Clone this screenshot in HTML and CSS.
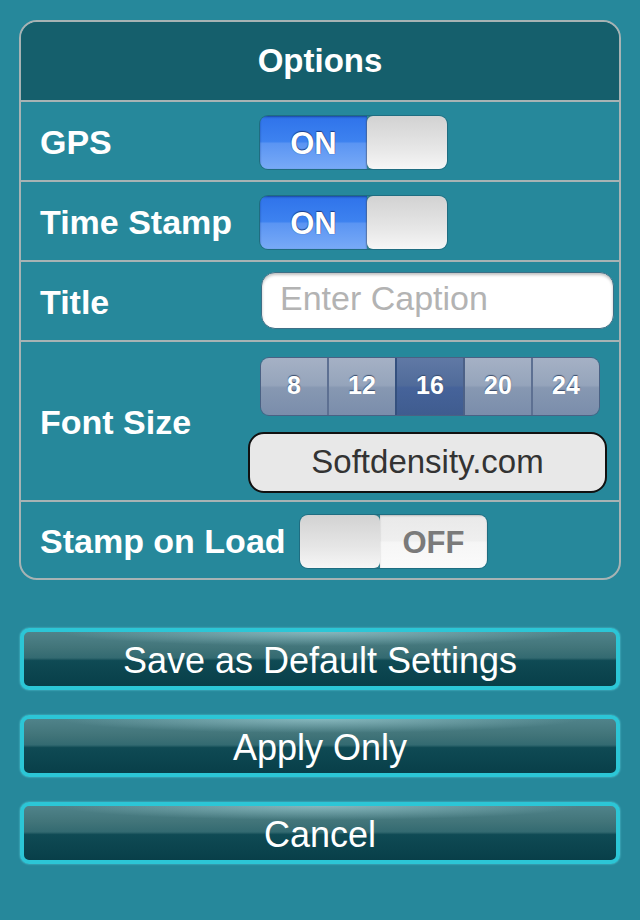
FILE: index.html
```html
<!DOCTYPE html>
<html>
<head>
<meta charset="utf-8">
<link rel="stylesheet" href="styles.css">
</head>
<body>
<div class="screen">
  <div class="panel">
    <div class="header">Options</div>
    <div class="row">
      <div class="label">GPS</div>
      <div class="switch on"><div class="track">ON</div><div class="knob"></div></div>
    </div>
    <div class="row">
      <div class="label">Time Stamp</div>
      <div class="switch on"><div class="track">ON</div><div class="knob"></div></div>
    </div>
    <div class="row">
      <div class="label">Title</div>
      <input class="caption" type="text" placeholder="Enter Caption">
    </div>
    <div class="row font-row">
      <div class="label font-label">Font Size</div>
      <div class="font-controls">
        <div class="segments">
          <div class="seg">8</div>
          <div class="seg">12</div>
          <div class="seg selected">16</div>
          <div class="seg">20</div>
          <div class="seg">24</div>
        </div>
        <div class="site-btn">Softdensity.com</div>
      </div>
    </div>
    <div class="row stamp-row">
      <div class="label stamp-label">Stamp on Load</div>
      <div class="switch off"><div class="knob"></div><div class="track">OFF</div></div>
    </div>
  </div>
  <div class="actions">
    <div class="btn">Save as Default Settings</div>
    <div class="btn">Apply Only</div>
    <div class="btn">Cancel</div>
  </div>
</div>
</body>
</html>
```
FILE: styles.css
```css
html, body {
  margin: 0;
  padding: 0;
  background: #26889b;
}
body {
  width: 640px;
  height: 920px;
  overflow: hidden;
  font-family: "Liberation Sans", Arial, sans-serif;
  color: #fff;
}
.screen {
  padding: 20px 19px 0 19px;
}
.panel {
  width: 602px;
  box-sizing: border-box;
  border: 2px solid #a7b3b4;
  border-radius: 18px;
  overflow: hidden;
}
.header {
  height: 78px;
  background: #155f6c;
  display: flex;
  align-items: center;
  justify-content: center;
  font-weight: bold;
  font-size: 33px;
}
.row {
  border-top: 2px solid #a7b3b4;
  height: 78px;
  display: flex;
  align-items: center;
  padding-left: 19px;
}
.label {
  width: 220px;
  flex: none;
  font-weight: bold;
  font-size: 34px;
  line-height: 1;
  padding-top: 1px;
}
.switch {
  width: 187px;
  height: 53px;
  display: flex;
  border-radius: 8px;
  overflow: hidden;
  box-shadow: 0 0 0 1px rgba(20, 60, 80, 0.35);
  margin-top: 3px;
}
.switch .track {
  width: 107px;
  display: flex;
  align-items: center;
  justify-content: center;
  font-weight: bold;
  font-size: 31px;
  padding-top: 2px;
}
.switch.on .track {
  background: linear-gradient(to bottom, #2f73ea 0%, #3d82f0 48%, #5b95f3 52%, #78aaf6 100%);
  color: #fff;
  text-shadow: 0 -1px 1px #1d3f86, 0 0 1px #1d3f86;
  box-shadow: inset 0 1px 2px rgba(10, 40, 110, 0.6);
}
.switch.off .track {
  background: linear-gradient(to bottom, #e9e9e9 0%, #efefef 48%, #f6f6f6 52%, #fbfbfb 100%);
  color: #7a7a7a;
  box-shadow: inset 0 1px 2px rgba(0, 0, 0, 0.2);
}
.switch .knob {
  width: 80px;
  border-radius: 6px;
  background: linear-gradient(to bottom, #d2d2d2 0%, #e6e6e6 60%, #f6f6f6 100%);
  box-shadow: 0 0 1px 1px rgba(90, 90, 90, 0.4);
}
.caption {
  width: 353px;
  height: 57px;
  margin-left: 1px;
  margin-top: -1px;
  box-sizing: border-box;
  border: 1px solid #3f6f86;
  border-radius: 14px;
  background: #fff;
  box-shadow: inset 0 2px 3px rgba(0, 0, 0, 0.25);
  padding: 0 0 4px 18px;
  font-family: "Liberation Sans", Arial, sans-serif;
  font-size: 34px;
  color: #333;
  outline: none;
}
.caption::placeholder {
  color: #b3b3b3;
}
.font-row {
  height: 158px;
  align-items: center;
}
.font-label {
  width: 208px;
}
.font-controls {
  display: flex;
  flex-direction: column;
  align-items: flex-start;
  gap: 17px;
  padding-top: 9px;
}
.segments {
  margin-left: 13px;
  width: 338px;
  height: 57px;
  display: flex;
  border-radius: 8px;
  overflow: hidden;
  box-shadow: 0 0 0 1px #4a6184;
}
.seg {
  flex: 1;
  display: flex;
  align-items: center;
  justify-content: center;
  font-weight: bold;
  font-size: 25px;
  color: #fff;
  text-shadow: 0 -1px 1px #3a4d6c;
  background: linear-gradient(to bottom, #a5b1c5 0%, #95a4bb 48%, #8798b2 52%, #7a8dab 100%);
  border-left: 2px solid #5d7092;
  padding-bottom: 3px;
}
.seg:first-child {
  border-left: none;
}
.seg.selected {
  background: linear-gradient(to bottom, #6079a5 0%, #506b9a 48%, #46639a 52%, #3f5c8f 100%);
  border-left-color: #34507e;
}
.seg.selected + .seg {
  border-left-color: #4c6187;
}
.site-btn {
  width: 359px;
  height: 61px;
  box-sizing: border-box;
  border: 2px solid #111;
  border-radius: 16px;
  background: #e8e8e8;
  color: #333;
  font-size: 33px;
  display: flex;
  align-items: center;
  justify-content: center;
  padding-bottom: 2px;
}
.stamp-row {
  height: 76px;
}
.stamp-label {
  width: 260px;
}
.actions {
  margin-top: 48px;
  margin-left: 1px;
  display: flex;
  flex-direction: column;
  gap: 25px;
}
.btn {
  width: 600px;
  height: 62px;
  box-sizing: border-box;
  border: 4px solid #2cc6d6;
  border-radius: 9px;
  box-shadow: 0 0 2px rgba(110, 230, 240, 0.8);
  background:
    radial-gradient(ellipse 260px 14px at 50% 0%, rgba(200, 245, 250, 0.45), rgba(200, 245, 250, 0) 100%),
    linear-gradient(to bottom, #50838a 0%, #417479 30%, #336a71 48%, #0f4a54 53%, #083f49 100%);
  display: flex;
  align-items: center;
  justify-content: center;
  font-size: 36px;
  color: #fff;
  padding-top: 3px;
}
```
